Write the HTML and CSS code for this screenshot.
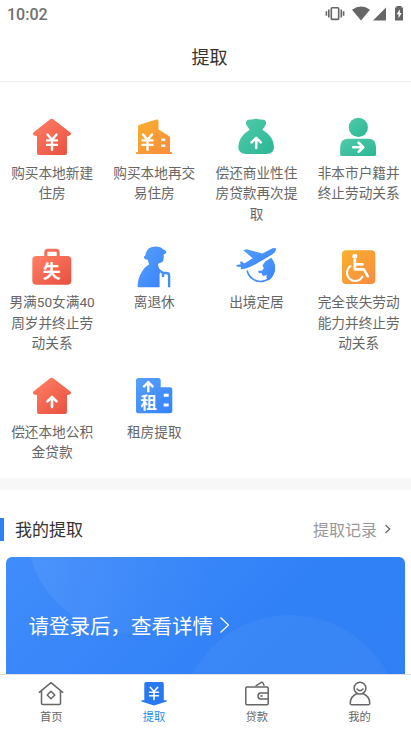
FILE: index.html
```html
<!DOCTYPE html>
<html lang="zh-CN">
<head>
<meta charset="UTF-8">
<meta name="viewport" content="width=device-width, initial-scale=1">
<title>提取</title>
<link rel="stylesheet" href="styles.css">
</head>
<body>
<svg class="defs" aria-hidden="true">
  <defs>
    <linearGradient id="red" x1="0" y1="0" x2="1" y2="1"><stop offset="0" stop-color="#ff8065"/><stop offset="1" stop-color="#e84f40"/></linearGradient>
    <linearGradient id="orange" x1="0" y1="0" x2="1" y2="1"><stop offset="0" stop-color="#f8b12c"/><stop offset="1" stop-color="#f98b40"/></linearGradient>
    <linearGradient id="green" x1="0" y1="0" x2="1" y2="1"><stop offset="0" stop-color="#50caaa"/><stop offset="1" stop-color="#2cb795"/></linearGradient>
    <linearGradient id="blue" x1="0" y1="0" x2="1" y2="1"><stop offset="0" stop-color="#58a0fc"/><stop offset="1" stop-color="#3582f9"/></linearGradient>
    <linearGradient id="veil" x1="0" y1="0" x2="1" y2="0"><stop offset="0" stop-color="#fff" stop-opacity=".07"/><stop offset=".9" stop-color="#fff" stop-opacity="0"/></linearGradient>
    <path id="house" d="M20.2 4.3Q21.7 3.2 23.2 4.3L40.3 17.4Q41.6 18.8 40.6 19.8Q39.4 21 37 21V38Q37 40 35 40H9Q7 40 7 38V21Q4.4 21 3.2 19.8Q2.2 18.8 3.4 17.4Z" fill="url(#red)"/>
    <path id="yen" d="M-4.5-7.3 0-1.9 4.5-7.3M-5-1.3H5M-5 3.2H5M0-1.9V8"/>
  </defs>
</svg>

<div class="status">
  <span class="time">10:02</span>
  <svg class="status-icons" width="82" height="18" viewBox="325 5 82 18">
    <g fill="none" stroke="#666" stroke-width="1.6"><rect x="331.3" y="7.8" width="7.4" height="11.6" rx="1"/><path d="M328.8 9.5v8M326.4 11.3v4.5M341.3 9.5v8M343.6 11.3v4.5"/></g>
    <path fill="#666" d="M352 9.7Q361.2 3.3 370 9.7L361 20.5ZM373 20.5 386 7.5V20.5ZM396.5 7.5V6H401.5V7.5H403V20.5H395V7.5Z"/>
    <path fill="#fff" d="M399.8 9.2 396.6 14.3H398.5V18.2L401.7 13H399.8Z"/>
  </svg>
</div>
<header class="header"><h1>提取</h1></header>

<main class="content">
  <section class="grid">
    <a class="cell">
      <svg class="icon" viewBox="0 0 44 44"><use href="#house"/><use class="line" href="#yen" transform="translate(22 26.7)"/></svg>
      <span>购买本地新建住房</span>
    </a>
    <a class="cell">
      <svg class="icon" viewBox="0 0 44 44"><path fill="url(#orange)" d="M6 12Q6 10.4 7.5 9.8L24.2 4.6Q26.5 4 26.5 6.3V14.5L37 21Q38 21.7 38 23V37H39Q40 37 40 38.2V39H4V38.2Q4 37 5 37H6Z"/><use class="line" href="#yen" transform="translate(15.5 26.7)"/><path class="line" d="M30.2 24.7H32.2M30.2 30.7H32.2"/></svg>
      <span>购买本地再交易住房</span>
    </a>
    <a class="cell">
      <svg class="icon" viewBox="0 0 44 44"><path fill="url(#green)" d="M15.6 14.7 12.3 9.8Q11.3 7 13.2 5.2Q15 4.1 18.2 4.5Q22 2.8 25.8 4.5Q29 4.1 31 5.2Q32.7 7 31.8 9.8L28.5 14.7Q40 22 40 32Q40 39 32 39H12.5Q4.3 39 4.3 32Q4.3 22 15.6 14.7Z"/><path class="arrow" d="M22.2 33V23M17.6 27.4 22.2 22.8 26.8 27.4"/></svg>
      <span>偿还商业性住房贷款再次提取</span>
    </a>
    <a class="cell">
      <svg class="icon nudge" viewBox="0 0 44 44"><circle cx="22.3" cy="12.4" r="9.6" fill="url(#green)"/><path fill="url(#green)" d="M4.2 32Q4.2 23.7 12.5 23.7H32Q40 23.7 40 32V39.5Q40 41 38.5 41H5.7Q4.2 41 4.2 39.5Z"/><path class="arrow" d="M17.2 32.3H27M22.6 27.7 27.3 32.3 22.6 36.9"/></svg>
      <span>非本市户籍并终止劳动关系</span>
    </a>
    <a class="cell">
      <svg class="icon" viewBox="0 0 44 44"><path d="M15.8 12V7.3Q15.8 5.3 17.8 5.3H26.2Q28.2 5.3 28.2 7.3V12" fill="none" stroke="#f4705a" stroke-width="3"/><rect x="2.3" y="11" width="39" height="28.8" rx="4" fill="url(#red)"/><text class="glyph" x="21.8" y="32.6" font-size="18">失</text></svg>
      <span>男满50女满40周岁并终止劳动关系</span>
    </a>
    <a class="cell">
      <svg class="icon" viewBox="0 0 44 44">
        <path fill="url(#blue)" d="M13.6 8.6Q15.5 1.5 23.5 1.5Q29 1.5 30.9 4.2Q34.6 5.5 34.2 7.6Q33.4 9.2 31.6 9.8Q32.6 17.5 27.5 18Q26 18.3 26 20Q27.2 24 28.3 26.5Q28 28 27.6 29V42.2H5.7Q5.6 33 9.8 27Q12 22.5 17.2 19.6Q16.4 17.5 15.8 14.8Q13 15 12 13Q11.5 11.2 13.2 10.8Z"/>
        <path fill="none" stroke="#428ffa" stroke-width="2.4" stroke-linejoin="round" d="M26 24.5 31 28H34.6Q37.1 28 37.1 31V42.2M31 27.5V32"/>
      </svg>
      <span>离退休</span>
    </a>
    <a class="cell">
      <svg class="icon" viewBox="0 0 44 44"><path d="M13.2 25.5A13.6 13.6 0 0 0 40 20" fill="none" stroke="#3f8bfa" stroke-width="1.6"/><path fill="url(#blue)" d="M37.2 12.7Q43 19 40.2 28Q37.5 34.5 34 35.5L32.5 32.5 32.8 30 29.5 31 28 29.8 28 28.2 24.8 28 24 26 28.2 25.5 29.8 23 28.5 20.5 31.2 16.5Z"/><path fill="url(#blue)" d="M9.3 5.2 12.5 4.2 28.5 8.5 38.5 3.3Q42.2 2.2 42 4Q41.8 7 38 9.5L32.3 13 24 17.8Q16 22.7 9.7 24L6.5 24.3 7.2 22 2.5 21.4V20L6.7 19.3 6 17 7.4 16.3 10.3 18.6 18.7 13.3Z"/></svg>
      <span>出境定居</span>
    </a>
    <a class="cell">
      <svg class="icon nudge" viewBox="0 0 44 44"><rect x="6" y="5.2" width="33.3" height="33.7" rx="4" fill="url(#orange)"/><circle cx="18.8" cy="11.3" r="2.5" fill="#fff"/><path d="M18.8 15V24.3H27.8L31.8 31.3M19.5 19.3H26.5" fill="none" stroke="#fff" stroke-width="2.7" stroke-linejoin="round" stroke-linecap="round"/><path d="M14.6 21A8.2 8.2 0 1 0 26.5 31.5" fill="none" stroke="#fff" stroke-width="2" stroke-linecap="round"/></svg>
      <span>完全丧失劳动能力并终止劳动关系</span>
    </a>
    <a class="cell">
      <svg class="icon" viewBox="0 0 44 44"><use href="#house"/><path class="arrow" d="M22 33V23M17.4 27.4 22 22.8 26.6 27.4"/></svg>
      <span>偿还本地公积金贷款</span>
    </a>
    <a class="cell">
      <svg class="icon" viewBox="0 0 44 44"><path fill="url(#blue)" d="M6.5 4H26.2Q28.7 4 28.7 6.5V13.3H37.8Q40.3 13.3 40.3 15.8V36.8Q40.3 39.3 37.8 39.3H6.5Q4 39.3 4 36.8V6.5Q4 4 6.5 4Z"/><path fill="none" stroke="#fff" stroke-width="2.4" d="M16.3 18.2V8.5M11.3 13.2 16.3 8.2 21.3 13.2"/><text class="glyph" x="16.7" y="35.3" font-size="16.5">租</text><path d="M31.7 21.3H36.7M31.7 31H36.7" stroke="#fff" stroke-width="3"/></svg>
      <span>租房提取</span>
    </a>
  </section>

  <section class="mine">
    <div class="mine-head">
      <h2>我的提取</h2>
      <a class="more"><span>提取记录</span>
        <svg width="8" height="12" viewBox="0 0 8 12"><path d="M1.5 2 5.7 6 1.5 10" fill="none" stroke="#666" stroke-width="1.3"/></svg>
      </a>
    </div>
    <div class="card">
      <svg class="card-art" viewBox="0 0 399 150"><circle cx="124" cy="-27" r="103" fill="url(#veil)"/><circle cx="284" cy="169" r="111" fill="#fff" fill-opacity=".045"/></svg>
      <span class="card-text">请登录后，查看详情</span>
      <svg class="card-arrow" width="12" height="18" viewBox="0 0 12 18"><path d="M1.5 1.5 9.5 9 1.5 16.5" fill="none" stroke="#fff" stroke-width="1.2"/></svg>
    </div>
  </section>
</main>

<nav class="tabs">
  <a class="tab"><svg width="26" height="26" viewBox="0 0 26 26"><path d="M1.3 11.3 13 1.7 24.7 11.3M3.5 10V22.3Q3.5 23.6 4.8 23.6H21.2Q22.5 23.6 22.5 22.3V10M13 10.2 16.8 14 13 17.8 9.2 14Z"/></svg><span>首页</span></a>
  <a class="tab active"><svg width="26" height="26" viewBox="0 0 26 26"><path class="solid" d="M5 1H21Q22.8 1 22.8 2.8V19.2H25.6V20.5L13 24.5.4 20.5V19.2H3.3V2.8Q3.3 1 5 1Z"/><path class="cut" d="M9.3 6.3 13 10.6 16.7 6.3M8.6 11.3H17.4M8.6 14.8H17.4M13 10.8V18.6"/></svg><span>提取</span></a>
  <a class="tab"><svg width="26" height="26" viewBox="0 0 26 26"><rect x="1.8" y="6" width="22.4" height="17.7" rx="1.2"/><path d="M12.2 4.7 17.3 1.3Q18.3.9 18.9 1.8L20 4.2M24.2 12H16.6Q14 12.2 14 15Q14 17.8 16.6 18H24.2M16.8 15H18.2"/></svg><span>贷款</span></a>
  <a class="tab"><svg width="26" height="26" viewBox="0 0 26 26"><circle cx="13" cy="7.2" r="5.9"/><path d="M10 8Q13 11.3 16 8M9.8 12.8Q3.3 15.5 3.2 22.3Q3.2 23.7 4.5 23.7H21.5Q22.8 23.7 22.8 22.3Q22.7 15.5 16.2 12.8"/></svg><span>我的</span></a>
</nav>
</body>
</html>
```
FILE: styles.css
```css
* { box-sizing: border-box; }

body {
  margin: 0;
  height: 730px;
  display: flex;
  flex-direction: column;
  overflow: hidden;
  background: #fff;
  color: #333;
  font-family: Roboto, "Noto Sans CJK SC", sans-serif;
}

.defs { position: absolute; width: 0; height: 0; }

.status {
  flex: none;
  height: 32px;
  padding: 5px 4px 0 7px;
  display: flex;
  justify-content: space-between;
}

.time { font-size: 16px; line-height: 20px; color: #707070; font-weight: 500; }

.header {
  flex: none;
  height: 50px;
  padding: 2px 0 0 8px;
  border-bottom: 1px solid #f0f0f0;
  display: flex;
  align-items: center;
  justify-content: center;
}

h1 { margin: 0; font-size: 18px; line-height: 26px; font-weight: 400; }

.content { flex: 1; min-height: 0; overflow: hidden; }

.grid {
  height: 396px;
  padding: 33px 1px 0;
  display: grid;
  grid-template-columns: repeat(4, 102.2px);
  grid-auto-rows: 105.5px;
  row-gap: 24px;
}

.cell { display: flex; flex-direction: column; align-items: center; }
.icon { width: 44px; height: 44px; flex: none; }
.nudge { margin-left: -1px; }
.cell span {
  width: 88px;
  margin-top: 3.6px;
  text-align: center;
  font-size: 13.67px;
  line-height: 20.5px;
  color: #666;
}

.line { fill: none; stroke: #fff; stroke-width: 2.4; stroke-linecap: round; }
.arrow { fill: none; stroke: #fff; stroke-width: 2.6; stroke-linecap: round; stroke-linejoin: round; }
.glyph { fill: #fff; font-weight: 700; text-anchor: middle; }

.mine { border-top: 12px solid #f7f7f7; }

.mine-head {
  height: 67px;
  padding: 12px 19px 0 0;
  display: flex;
  align-items: center;
  justify-content: space-between;
  line-height: 23px;
}

h2 {
  height: 23px;
  margin: 0;
  padding-left: 11px;
  border-left: 4px solid #2f80f7;
  font-size: 17px;
  line-height: 25px;
  font-weight: 400;
}

.more { display: flex; align-items: center; gap: 7px; font-size: 16px; color: #999; }
.more span { height: 23px; line-height: 25px; }
.more svg { margin-bottom: 1px; }

.card {
  position: relative;
  height: 150px;
  margin: 0 6px;
  padding: 55px 0 0 22.5px;
  border-radius: 6px;
  overflow: hidden;
  display: flex;
  align-items: flex-start;
  gap: 5.5px;
  background: linear-gradient(135deg, #408cfc 0, #3080f6 65%, #307ff5 100%);
  color: #fff;
}

.card-art { position: absolute; left: 0; top: 0; width: 399px; height: 150px; }
.card-text { position: relative; font-size: 20.5px; line-height: 30px; }
.card-arrow { position: relative; margin-top: 4px; }

.tabs {
  flex: none;
  height: 56px;
  border-top: 1px solid #e2e2e5;
  display: flex;
}

.tab {
  flex: 1;
  padding-top: 6px;
  display: flex;
  flex-direction: column;
  align-items: center;
  font-size: 11.3px;
  line-height: 16px;
  color: #666;
}

.tab svg { fill: none; stroke: #666; stroke-width: 1.5; stroke-linejoin: round; stroke-linecap: round; }
.tab span { margin-top: 3px; }
.active { color: #2b8ce8; }
.tab .solid { fill: #2878f0; stroke: none; }
.tab .cut { stroke: #fff; stroke-width: 1.6; }
```
